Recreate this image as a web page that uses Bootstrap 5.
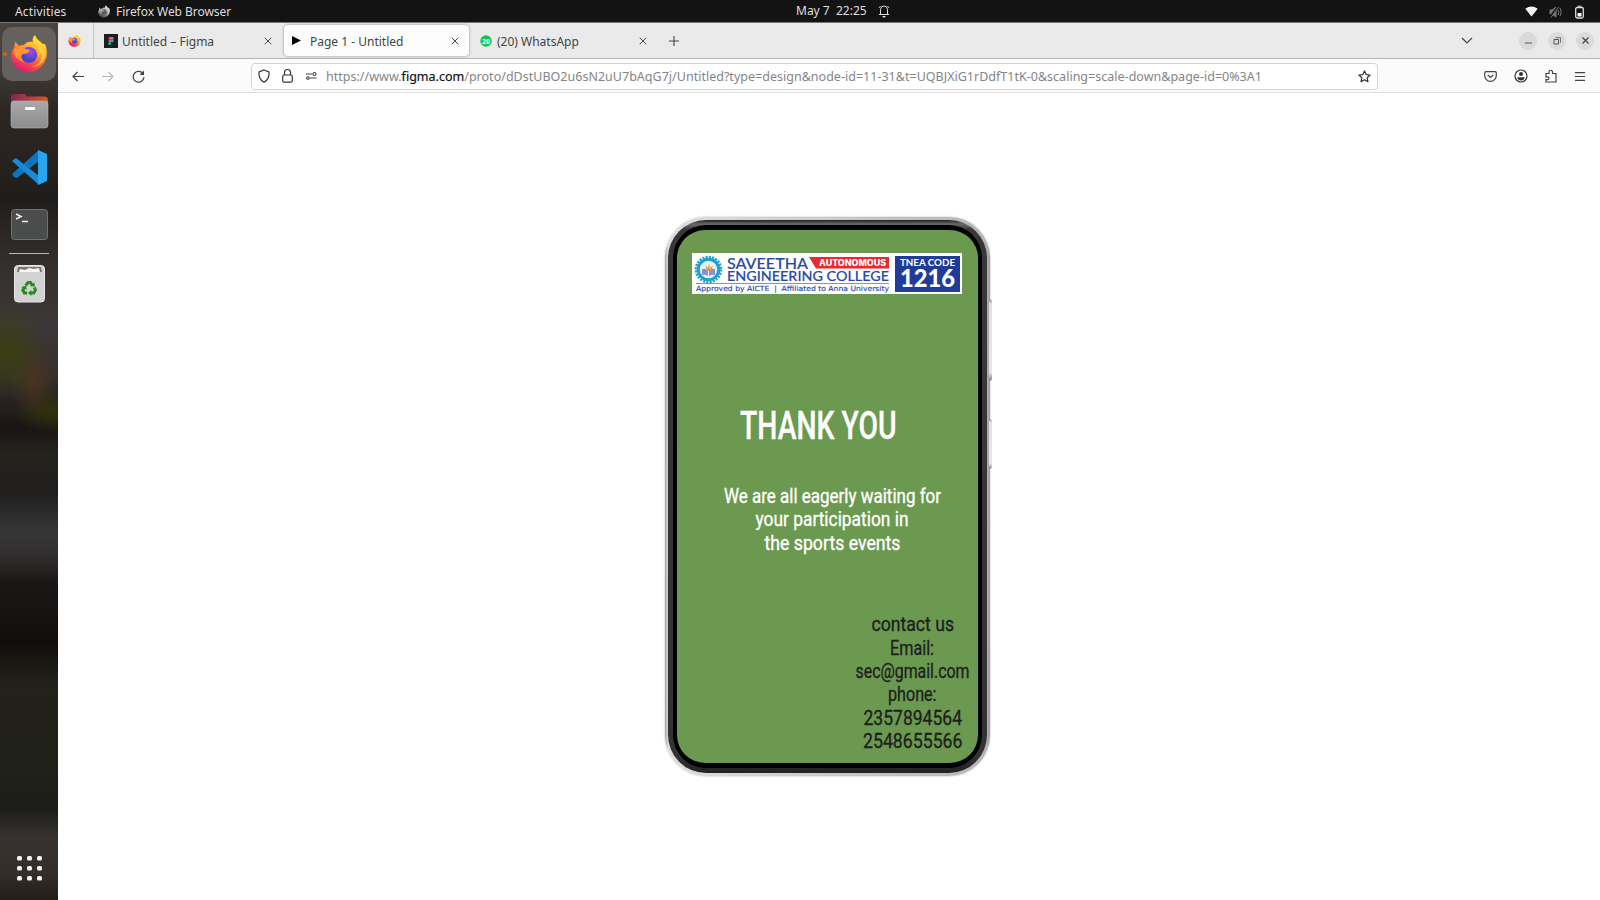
<!DOCTYPE html>
<html lang="en">
<head>
<meta charset="utf-8">
<title>Page 1 - Untitled</title>
<link href="https://cdn.jsdelivr.net/npm/bootstrap@5.3.0/dist/css/bootstrap.min.css" rel="stylesheet">
<style>
body{width:1600px;height:900px;font-family:"Noto Sans","Open Sans",sans-serif;font-size:12px;line-height:16px;overflow:hidden}
svg{display:block;flex:none;overflow:visible}
.topbar{height:23px;background:#131313;color:#dedede;border-bottom:1px solid #777;padding:1px 0 0 15px}
.topbar .clock{left:796px;top:3px}
.dock{width:58px;background:
 radial-gradient(ellipse 36px 48px at 8px 328px,#3a4010,transparent),
 radial-gradient(ellipse 24px 40px at 33px 355px,#4a3220,transparent),
 radial-gradient(ellipse 38px 22px at 52px 388px,#30340c,transparent),
 linear-gradient(#4b4541 0,#453f3b 40px,#2d2723 85px,#282320 130px,#1f1d1b 175px,#332f2c 240px,#38332f 270px,#3c3837 300px,#35302d 350px,#1a1514 405px,#24221d 430px,#211f1d 470px,#353638 508px,#322f2f 530px,#1b1716 560px,#110e0c 620px,#22211a 660px,#202119 750px,#1b1d19 785px,#37322f 815px,#332e2a 850px,#231d18 877px)}
.ff-tile{width:54px;height:54px;border-radius:10px;background:#65615f;margin-top:4px}
.ff-tile .dot{left:1px;top:25px;width:4px;height:4px;background:#e95420}
.tabs{height:36px;background:#eaeaea;border-bottom:1px solid #b5b5b5;color:#444}
.tabs span{padding-top:2px}
.pin{width:36px;border-right:1px solid #c6c6c6}
.tab-item{height:31px;width:185px;margin-right:3px;padding:0 9px 0 10px}
.tab-item.on{background:#fcfcfc;border-radius:4px;box-shadow:0 0 3px rgba(0,0,0,.4)}
.wbtn{width:18px;height:18px;border-radius:50%;background:#dadada}
.tools{height:34px;background:#fbfbfb;border-bottom:1px solid #dedede;padding-top:1px}
.urlbox{width:1127px;height:27px;background:#fff;border:1px solid #d4d4d4;border-radius:4px;color:#858585;margin-left:106px;padding:0 6px 0 6px;font-size:12.500px}
.urlbox b{color:#111;font-weight:400;-webkit-text-stroke:.2px #111}
.phone{width:325px;height:559px;margin:124px 0 0 607px;border-radius:41px;background:linear-gradient(90deg,#a5a5a5,#dedede 1%,#b5b5b5 99%,#999);padding:3px;box-shadow:0 0 2px #aaa}
.phone .rim{height:553px;border-radius:38px;padding:5px;background:linear-gradient(#202020,#6a6a6a 4px,#383838 10px,#333 97%,#222)}
.phone .bez{height:543px;border-radius:33px;background:#000;padding:5px 4px 4px}
.phone .scr{height:533px;border-radius:28px;background:#6a994f}
.side{left:324px;width:3px;border-radius:0 3px 3px 0;background:linear-gradient(#888,#e2e2e2 6%,#e6e6e6 90%,#777)}
.hand{font-family:Roboto,sans-serif}
</style>
</head>
<body class="d-flex flex-column m-0 bg-white">
<svg width="0" height="0" class="position-absolute"><defs>
<linearGradient id="fo" x1=".8" y1="0" x2=".3" y2="1"><stop offset="0" stop-color="#fff44f"/><stop offset=".35" stop-color="#ffb22e"/><stop offset=".65" stop-color="#ff5a36"/><stop offset="1" stop-color="#e3107c"/></linearGradient>
<radialGradient id="fp" cx=".6" cy=".3"><stop offset="0" stop-color="#a44df0"/><stop offset="1" stop-color="#4a45c8"/></radialGradient>
<linearGradient id="fd" x1="0" x2="1"><stop stop-color="#7d2a52"/><stop offset="1" stop-color="#e0532a"/></linearGradient>
<linearGradient id="fg" x2="0" y2="1"><stop stop-color="#a9a9a9"/><stop offset="1" stop-color="#8c8c8c"/></linearGradient>
<symbol id="fox" viewBox="0 0 36 38"><path d="M22 7C21 3 23 1 24 0c2 5 5 6 8 9l2 0c4 9 1 18-4 23-7 7-19 7-25 0C-1 26-1 17 3 13l1-6c2 1 3 3 4 4 2-1 3-1 5-1 2-3 5-4 9-3z" fill="url(#fo)"/><circle cx="18" cy="20" r="8" fill="url(#fp)"/><path d="M3 14c4-3 8-3 12 0l4 1c-1 3-4 4-7 4-3 2-2 6 2 8-7-1-12-6-11-13z" fill="#ff9633"/><path d="M22 7c5 3 7 8 5 14 2 0 3-3 3-5 3 9-3 15-10 16 11 0 17-9 12-21-3-3-6-5-8-10-2 1-3 3-2 6z" fill="#ffd43a" opacity=".75"/></symbol>
<symbol id="x" viewBox="0 0 8 8"><path d="M.7.7l6.6 6.6M7.3.7L.7 7.3" stroke="#4a4a4a" fill="none"/></symbol>
</defs></svg>

<header class="topbar d-flex align-items-center position-relative">
 <span class="text-nowrap" style="width:83px;letter-spacing:.15px">Activities</span>
 <svg width="12" height="13" style="filter:grayscale(1)"><use href="#fox"/></svg>
 <span class="text-nowrap" style="margin-left:6px;letter-spacing:-.05px">Firefox Web Browser</span>
 <span class="clock position-absolute">May 7&nbsp; 22:25</span>
 <svg class="position-absolute" style="left:878px;top:4px" width="12" height="14" fill="none" stroke="#ddd"><path d="M1 10.500h10M2.500 10V5.500a3.500 3.500 0 0 1 7 0V10" /><path d="M1 4l1.500-2M11 4L9.500 2" stroke-width=".8"/><path d="M4 12h4l-2 2z" fill="#ddd" stroke="none"/></svg>
 <svg class="ms-auto" width="13" height="11"><path d="M.3 2.800Q6.500-1.800 12.700 2.800L6.500 10.500z" fill="#f5f5f5"/></svg>
 <svg style="margin-left:11px" width="13" height="12" fill="none" stroke="#777"><path d="M1 4h2l4-3v10L3 8H1z" fill="#777"/><path d="M1 11L9 .5" stroke="#131313" stroke-width="2"/><path d="M2 11.500L9.500 1M9 4q1.500 2 0 5M11 2q2.500 4 0 8"/></svg>
 <svg style="margin:0 16px 0 13px" width="9" height="14" fill="none" stroke="#ddd"><rect x=".7" y="2.500" width="7.600" height="10.500" rx="1.500" stroke-width="1.300"/><path d="M2.500 1.200h4"/><path d="M2.500 8h4v3.500h-4z" fill="#fff" stroke="none"/></svg>
</header>

<div class="d-flex flex-grow-1">
<aside class="dock d-flex flex-column align-items-center flex-shrink-0">
 <div class="ff-tile position-relative d-flex align-items-center justify-content-center"><i class="dot rounded-circle position-absolute"></i><svg width="36" height="38"><use href="#fox"/></svg></div>
 <svg width="37" height="35" style="margin:13px 0 0 1px"><path d="M0 17V3q0-3 3-3h10q2 0 3 2.500h17q4 0 4 4V17z" fill="url(#fd)"/><rect y="7" width="37" height="27" rx="3" fill="url(#fg)" stroke="#b5b5b5" stroke-width=".6"/><rect x="14" y="13" width="10" height="3" rx="1" fill="#fff"/></svg>
 <svg width="36" height="36" style="margin:21px 0 0 1px"><path d="M27 0L0 24l2 3 3 1L27 11z" fill="#0d75bd"/><path d="M0 11l4-3 23 18v9z" fill="#1a8ad4"/><path d="M26 0l9 4v27l-9 4z" fill="#29a4ee"/></svg>
 <svg width="37" height="31" style="margin:23px 0 0 1px"><rect x=".5" y=".5" width="36" height="30" rx="3" fill="#4b4c4c" stroke="#717171"/><path d="M5 5l5 2.500L5 10M11 12.500h6" fill="none" stroke="#eee" stroke-width="1.500"/></svg>
 <div style="width:40px;height:1px;background:#b9b6b3;margin-top:13px"></div>
 <svg width="31" height="38" style="margin-top:11px"><rect x=".5" y=".5" width="30" height="36.500" rx="3.500" fill="#d2d2d2" stroke="#e6e6e6"/><path d="M3 7l1-5h23l1 5z" fill="#777"/><path d="M5 7l1-3 5 1 4-2 5 1 5-1 1 4z" fill="#f5f5f5"/>
 <g transform="translate(2.200 3.500) scale(.82)"><g fill="none" stroke="#28891e" stroke-width="3.600"><path d="M11.500 21l3-4h3l2 3.500M22 23l1.500 3-2 4h-4.500M13.500 30H10l-2-3.500 2.500-4"/></g><path d="M17 21.500l6 .5-1-5zM18.500 26v7.500L14.500 30zM6 22.500l6-1.500 1 5z" fill="#28891e"/></g></svg>
 <svg class="mt-auto" width="26" height="24" fill="#f3f3f1" style="margin:0 0 21px 1px"><g id="dots"><rect y="1" width="5" height="4.500" rx="1.500"/><rect x="10" y="1" width="5" height="4.500" rx="1.500"/><rect x="20" y="1" width="5" height="4.500" rx="1.500"/></g><use href="#dots" y="10"/><use href="#dots" y="20"/></svg>
</aside>

<div class="flex-grow-1 d-flex flex-column">
 <nav class="tabs d-flex align-items-center">
  <div class="pin h-100 d-flex align-items-center justify-content-center"><svg width="13" height="13" style="margin-left:-2px"><use href="#fox"/></svg></div>
  <div class="tab-item d-flex align-items-center">
   <svg width="14" height="14"><rect width="14" height="14" fill="#1e1e1e"/><path d="M5.800 3H7v2.600H5.800a1.300 1.300 0 0 1 0-2.600z" fill="#f24e1e"/><path d="M7 3h1.300a1.300 1.300 0 0 1 0 2.600H7z" fill="#ff7262"/><path d="M7 5.600H5.800a1.300 1.300 0 0 0 0 2.600H7z" fill="#a259ff"/><circle cx="8.300" cy="6.900" r="1.300" fill="#1abcfe"/><path d="M7 8.200H5.800A1.400 1.400 0 1 0 7 9.600z" fill="#0acf83"/></svg>
   <span style="margin-left:4px">Untitled – Figma</span><svg class="ms-auto" width="8" height="8" style="margin-right:-2px"><use href="#x"/></svg>
  </div>
  <div class="tab-item on d-flex align-items-center" style="margin-left:2px">
   <svg width="9" height="9" style="margin-left:-2px"><path d="M0 0l9 4.500L0 9z"/></svg>
   <span style="margin-left:9px">Page 1 - Untitled</span><svg class="ms-auto" width="8" height="8" style="margin-right:1px"><use href="#x"/></svg>
  </div>
  <div class="tab-item d-flex align-items-center">
   <svg width="12" height="12" style="margin-left:-2px"><circle cx="6" cy="6" r="5.700" fill="#16c34f"/><text x="6" y="8.500" font-size="7" font-weight="700" text-anchor="middle" fill="#fff">20</text></svg>
   <span style="margin-left:5px">(20) WhatsApp</span><svg class="ms-auto" width="8" height="8" style="margin-right:1px"><use href="#x"/></svg>
  </div>
  <svg width="10" height="10" style="margin-left:9px" stroke="#444" stroke-width="1.100"><path d="M0 5h10M5 0v10"/></svg>
  <svg class="ms-auto" width="12" height="7" fill="none" stroke="#444" stroke-width="1.200"><path d="M1 1l5 5 5-5"/></svg>
  <div class="d-flex" style="gap:10.500px;margin:0 6px 0 46px">
   <div class="wbtn d-flex align-items-center justify-content-center"><svg width="7" height="6"><path d="M0 5h7" stroke="#555"/></svg></div>
   <div class="wbtn d-flex align-items-center justify-content-center"><svg width="8" height="8" fill="none" stroke="#555"><path d="M1 2.500h4.500V7H1z"/><path d="M2.500.7h5v5" stroke-width=".8"/></svg></div>
   <div class="wbtn d-flex align-items-center justify-content-center"><svg width="7" height="7" stroke="#444" stroke-width="1.200"><path d="M.5.5l6 6M6.500.5l-6 6"/></svg></div>
  </div>
 </nav>
 <div class="tools d-flex align-items-center">
  <svg width="12" height="11" style="margin-left:14px" fill="none" stroke="#444" stroke-width="1.200"><path d="M12 5.500H1M5.500 1L1 5.500 5.500 10"/></svg>
  <svg width="12" height="11" style="margin-left:18px" fill="none" stroke="#b5b5b5" stroke-width="1.100"><path d="M0 5.500h11M6.500 1L11 5.500 6.500 10"/></svg>
  <svg width="13" height="13" style="margin-left:18px" fill="none" stroke="#444" stroke-width="1.200"><path d="M11.500 4.500A5.400 5.400 0 1 0 12 7"/><path d="M12 .5v4.500H7.500z" fill="#444" stroke="none"/></svg>
  <div class="urlbox d-flex align-items-center">
   <svg width="12" height="14" fill="none" stroke="#333" stroke-width="1.200"><path d="M6 1l5 2q.8 7-5 10.200Q.2 10 1 3z"/></svg>
   <svg width="11" height="14" style="margin-left:12px" fill="none" stroke="#333" stroke-width="1.200"><rect x=".7" y="6" width="9.600" height="7.200" rx="1.500"/><path d="M2.500 6V3.500a3 3 0 0 1 6 0V6"/></svg>
   <svg width="12" height="8" style="margin-left:12px" fill="none" stroke="#444" stroke-width="1.100"><path d="M1 2h6.500M5 6h6.500M1 6h.7"/><circle cx="9.500" cy="2" r="1.500"/><circle cx="3" cy="6" r="1.300"/></svg>
   <span class="text-nowrap" style="margin-left:9px;padding-top:1px;letter-spacing:.015px">https://www.<b>figma.com</b>/proto/dDstUBO2u6sN2uU7bAqG7j/Untitled?type=design&amp;node-id=11-31&amp;t=UQBJXiG1rDdfT1tK-0&amp;scaling=scale-down&amp;page-id=0%3A1</span>
   <svg class="ms-auto" width="13" height="13" viewBox="0 0 14 14" fill="none" stroke="#333" stroke-width="1.300" stroke-linejoin="round"><path d="M7 1l1.800 3.900 4.200.5-3.100 2.900.8 4.200L7 10.400l-3.700 2.100.8-4.200L1 5.400l4.200-.5z"/></svg>
  </div>
  <svg width="13" height="11" style="margin-left:106px" fill="none" stroke="#444" stroke-width="1.200"><path d="M2 .7h9q1.300 0 1.300 1.300v2.500a5.800 5.800 0 0 1-11.600 0V2Q.7.700 2 .7z"/><path d="M3.700 4l2.800 2.500L9.300 4"/></svg>
  <svg width="14" height="14" style="margin-left:17px" fill="none" stroke="#333" stroke-width="1.200"><circle cx="7" cy="7" r="6"/><circle cx="7" cy="5" r="2" fill="#333" stroke="none"/><path d="M3.200 8.200h7.600Q10 11.500 7 11.500T3.200 8.200z" fill="#333" stroke="none"/></svg>
  <svg width="12" height="14" style="margin-left:17px" fill="none" stroke="#444" stroke-width="1.200"><path d="M1 8V4.500h3V3a1.700 1.700 0 0 1 3.500 0v1.500H11V13H1v-2.500q3 .5 3-1.200T1 8z"/></svg>
  <svg width="10" height="9" style="margin-left:18px" stroke="#444" stroke-width="1.100"><path d="M0 .6h10M0 4.500h10M0 8.400h10"/></svg>
 </div>
 <main class="flex-grow-1">
  <div class="phone position-relative">
   <i class="side position-absolute" style="top:82px;height:82px"></i><i class="side position-absolute" style="top:202px;height:50px"></i>
   <div class="rim"><div class="bez"><div class="scr hand">
    <svg style="padding-top:23px;margin-left:15px;box-sizing:content-box" width="270" height="41" fill="#2a49a0"><rect width="270" height="41" fill="#fff"/>
     <circle cx="16.500" cy="16.500" r="12.300" fill="none" stroke="#1ca2ce" stroke-width="3" stroke-dasharray="2 1.220"/><circle cx="16.500" cy="16.500" r="10.200" fill="#e9f4fa" stroke="#1ca2ce" stroke-width="3"/><path d="M10 16q3-1 6 1v6q-3-2-6-1zM23 16q-3-1-6 1v6q3-2 6-1z" fill="#8b90ca"/><path d="M13 12l3 3 1-5 1 5 3-3-2 6h-4z" fill="#e59a42"/>
     <g font-family="Lato,sans-serif" font-weight="500" stroke="#2a49a0" stroke-width=".15"><text x="35" y="15.800" font-size="16" textLength="81" lengthAdjust="spacingAndGlyphs">SAVEETHA</text><text x="35" y="28.300" font-size="13.800" textLength="162" lengthAdjust="spacingAndGlyphs">ENGINEERING COLLEGE</text></g>
     <path d="M117 4h80v11.500h-73z" fill="#e82a2d"/><text x="127" y="12.800" font-family="Inter" font-size="8.300" font-weight="800" fill="#fff" textLength="67" lengthAdjust="spacingAndGlyphs">AUTONOMOUS</text>
     <path d="M4 30.500h193" stroke="#2a49a0" stroke-width=".6"/><text x="4" y="38" font-family="DejaVu Sans" font-size="7" stroke="#2a49a0" stroke-width=".15" textLength="193" lengthAdjust="spacingAndGlyphs">Approved by AICTE&#160; |&#160; Affiliated to Anna University</text>
     <rect x="203" y="3" width="65" height="36" fill="#203c98"/><text x="208" y="13" font-family="Lato" font-size="8.600" font-weight="700" fill="#fff" textLength="55" lengthAdjust="spacingAndGlyphs">TNEA CODE</text><text x="208" y="34.200" font-family="Lato" font-size="25" font-weight="900" fill="#fff" textLength="55" lengthAdjust="spacingAndGlyphs">1216</text>
    </svg>
    <svg style="margin:107px 0 0 52px" width="220" height="60" fill="#fff" stroke="#fff" stroke-width=".4"><text x="11" y="38" font-size="39.500" font-weight="500" textLength="156.500" lengthAdjust="spacingAndGlyphs">THANK YOU</text></svg>
    <svg style="margin:19px 0 0 37px" width="255" height="80" fill="#fff" stroke="#fff" stroke-width=".35" font-size="20"><text x="10" y="23" textLength="217" lengthAdjust="spacingAndGlyphs">We are all eagerly waiting for</text><text x="41.500" y="46" textLength="153" lengthAdjust="spacingAndGlyphs">your participation in</text><text x="50.500" y="69.500" textLength="136" lengthAdjust="spacingAndGlyphs">the sports events</text></svg>
    <svg style="margin:48px 0 0 167px" width="130" height="148" fill="#1f1f1f" stroke="#1f1f1f" stroke-width=".35" font-size="20"><text x="27.500" y="23" textLength="82.500" lengthAdjust="spacingAndGlyphs">contact us</text><text x="46" y="46.500" textLength="44" lengthAdjust="spacingAndGlyphs">Email:</text><text x="11.500" y="70" textLength="114" lengthAdjust="spacingAndGlyphs">sec@gmail.com</text><text x="44" y="93" textLength="48.500" lengthAdjust="spacingAndGlyphs">phone:</text><text x="19.500" y="116.500" textLength="98.500" lengthAdjust="spacingAndGlyphs">2357894564</text><text x="19" y="140" textLength="99.500" lengthAdjust="spacingAndGlyphs">2548655566</text></svg>
   </div></div></div>
  </div>
 </main>
</div>
</div>
<script src="https://cdn.jsdelivr.net/npm/bootstrap@5.3.0/dist/js/bootstrap.bundle.min.js"></script>
</body>
</html>
